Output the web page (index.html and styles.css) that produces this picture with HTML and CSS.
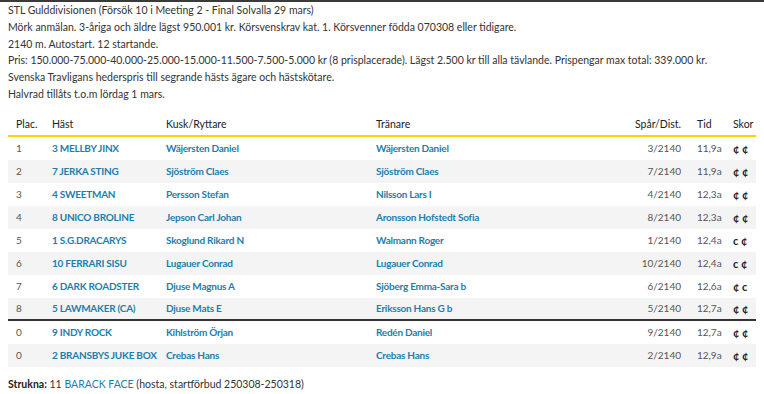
FILE: index.html
```html
<!DOCTYPE html>
<html lang="sv">
<head>
<meta charset="utf-8">
<link rel="stylesheet" href="styles.css">
</head>
<body>
<div class="page">
  <div class="info">
    <p>STL Gulddivisionen (Försök 10 i Meeting 2 - Final Solvalla 29 mars)</p>
    <p>Mörk anmälan. 3-åriga och äldre lägst 950.001 kr. Körsvenskrav kat. 1. Körsvenner födda 070308 eller tidigare.</p>
    <p>2140 m. Autostart. 12 startande.</p>
    <p>Pris: 150.000-75.000-40.000-25.000-15.000-11.500-7.500-5.000 kr (8 prisplacerade). Lägst 2.500 kr till alla tävlande. Prispengar max total: 339.000 kr.</p>
    <p>Svenska Travligans hederspris till segrande hästs ägare och hästskötare.</p>
    <p>Halvrad tillåts t.o.m lördag 1 mars.</p>
  </div>
  <table class="results">
    <colgroup>
      <col class="w-plac"><col class="w-hast"><col class="w-kusk"><col class="w-tran"><col class="w-dist"><col class="w-tid"><col class="w-skor">
    </colgroup>
    <thead>
      <tr>
        <th>Plac.</th>
        <th>Häst</th>
        <th>Kusk/Ryttare</th>
        <th>Tränare</th>
        <th class="c-dist">Spår/Dist.</th>
        <th>Tid</th>
        <th>Skor</th>
      </tr>
    </thead>
    <tbody>
      <tr><td>1</td><td><a>3 MELLBY JINX</a></td><td><a>Wäjersten Daniel</a></td><td><a>Wäjersten Daniel</a></td><td class="c-dist">3/2140</td><td>11,9a</td><td class="skor">¢ ¢</td></tr>
      <tr><td>2</td><td><a>7 JERKA STING</a></td><td><a>Sjöström Claes</a></td><td><a>Sjöström Claes</a></td><td class="c-dist">7/2140</td><td>11,9a</td><td class="skor">¢ ¢</td></tr>
      <tr><td>3</td><td><a>4 SWEETMAN</a></td><td><a>Persson Stefan</a></td><td><a>Nilsson Lars I</a></td><td class="c-dist">4/2140</td><td>12,3a</td><td class="skor">¢ ¢</td></tr>
      <tr><td>4</td><td><a>8 UNICO BROLINE</a></td><td><a>Jepson Carl Johan</a></td><td><a>Aronsson Hofstedt Sofia</a></td><td class="c-dist">8/2140</td><td>12,3a</td><td class="skor">¢ ¢</td></tr>
      <tr><td>5</td><td><a>1 S.G.DRACARYS</a></td><td><a>Skoglund Rikard N</a></td><td><a>Walmann Roger</a></td><td class="c-dist">1/2140</td><td>12,4a</td><td class="skor">c ¢</td></tr>
      <tr><td>6</td><td><a>10 FERRARI SISU</a></td><td><a>Lugauer Conrad</a></td><td><a>Lugauer Conrad</a></td><td class="c-dist">10/2140</td><td>12,4a</td><td class="skor">c ¢</td></tr>
      <tr><td>7</td><td><a>6 DARK ROADSTER</a></td><td><a>Djuse Magnus A</a></td><td><a>Sjöberg Emma-Sara b</a></td><td class="c-dist">6/2140</td><td>12,6a</td><td class="skor">¢ c</td></tr>
      <tr class="last-placed"><td>8</td><td><a>5 LAWMAKER (CA)</a></td><td><a>Djuse Mats E</a></td><td><a>Eriksson Hans G b</a></td><td class="c-dist">5/2140</td><td>12,7a</td><td class="skor">¢ ¢</td></tr>
      <tr><td>0</td><td><a>9 INDY ROCK</a></td><td><a>Kihlström Örjan</a></td><td><a>Redén Daniel</a></td><td class="c-dist">9/2140</td><td>12,7a</td><td class="skor">¢ ¢</td></tr>
      <tr><td>0</td><td><a>2 BRANSBYS JUKE BOX</a></td><td><a>Crebas Hans</a></td><td><a>Crebas Hans</a></td><td class="c-dist">2/2140</td><td>12,9a</td><td class="skor">¢ ¢</td></tr>
    </tbody>
  </table>
  <p class="strukna"><strong>Strukna:</strong> 11 <a>BARACK FACE</a> (hosta, startförbud 250308-250318)</p>
</div>
</body>
</html>
```
FILE: styles.css
```css
html, body {
  margin: 0;
  padding: 0;
  background: #fff;
}
body {
  font-family: "Lato", "Liberation Sans", sans-serif;
  font-size: 10.5px;
  color: #333;
  border-top: 2px solid #3a3a3a;
}
.page {
  padding: 0 8px;
}
.info p {
  margin: 0;
  line-height: 16.8px;
  white-space: nowrap;
}
.results {
  width: 748px;
  table-layout: fixed;
  border-collapse: collapse;
  margin-top: 11px;
}
.w-plac { width: 44px; }
.w-hast { width: 114px; }
.w-kusk { width: 210px; }
.w-tran { width: 250px; }
.w-dist { width: 71px; }
.w-tid { width: 36px; }
.w-skor { width: 23px; }
.results th {
  text-align: left;
  font-weight: 400;
  font-size: 10.5px;
  color: #222;
  height: 21px;
  padding: 0;
  border-bottom: 2px solid #ffd200;
  vertical-align: middle;
  white-space: nowrap;
}
.results td {
  height: 23px;
  padding: 0;
  font-size: 10px;
  color: #555;
  vertical-align: middle;
  white-space: nowrap;
}
.results th:first-child, .results td:first-child {
  padding-left: 8px;
}
.results tbody tr:nth-child(even) td {
  background: #f4f4f4;
}
.results tr.last-placed td {
  height: 21px;
  border-bottom: 2px solid #333;
}
.results .c-dist {
  text-align: right;
  padding-right: 16px;
}
.results a {
  color: #1d7eab;
  font-weight: 700;
  font-size: 10px;
  letter-spacing: -0.25px;
  text-decoration: none;
}
.results td.skor {
  font-weight: 700;
  font-size: 11px;
  color: #222;
}
.strukna {
  margin: 9px 0 0 0;
  font-size: 10.5px;
  line-height: 17px;
  color: #333;
  white-space: nowrap;
}
.strukna strong {
  font-weight: 700;
  color: #222;
}
.strukna a {
  color: #1d7eab;
  text-decoration: none;
}
```
